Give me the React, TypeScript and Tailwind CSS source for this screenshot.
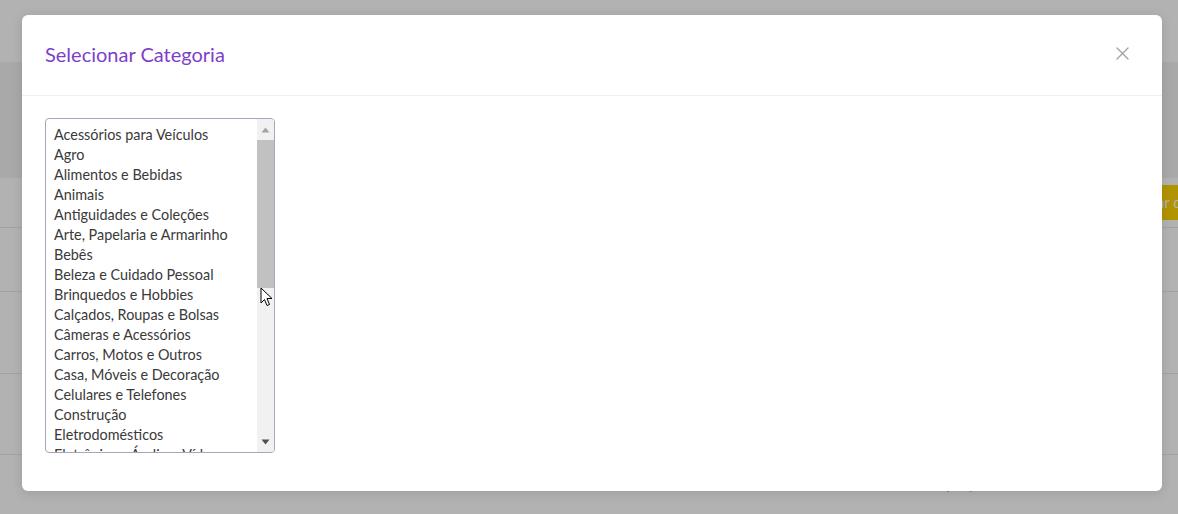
import React from "react";

const cats = [
  "Acessórios para Veículos",
  "Agro",
  "Alimentos e Bebidas",
  "Animais",
  "Antiguidades e Coleções",
  "Arte, Papelaria e Armarinho",
  "Bebês",
  "Beleza e Cuidado Pessoal",
  "Brinquedos e Hobbies",
  "Calçados, Roupas e Bolsas",
  "Câmeras e Acessórios",
  "Carros, Motos e Outros",
  "Casa, Móveis e Decoração",
  "Celulares e Telefones",
  "Construção",
  "Eletrodomésticos",
  "Eletrônicos, Áudio e Vídeo",
  "Esportes e Fitness",
  "Ferramentas",
  "Festas e Lembrancinhas",
  "Games",
  "Imóveis",
  "Indústria e Comércio",
  "Informática",
  "Ingressos",
  "Instrumentos Musicais",
  "Joias e Relógios",
  "Livros, Revistas e Comics",
  "Música, Filmes e Seriados",
  "Saúde",
  "Serviços",
  "Mais Categorias",
];

export default function App() {
  const font = { fontFamily: "Lato, 'Noto Sans', sans-serif" };
  return (
    <div className="relative w-[1178px] h-[514px] overflow-hidden bg-white" style={font}>
      {/* background page */}
      <div className="flex flex-col w-full">
        <div className="h-[62px] bg-white" />
        <div className="h-[116px] bg-[#f3f3f3]" />
        <div className="h-[50px] border-b border-[#e9e9e9] flex items-center justify-end">
          <div className="h-[35px] w-[200px] -mr-[80px] bg-[#ffd400] text-white text-[15px] flex items-center pl-[55px] whitespace-nowrap overflow-hidden">
            Carregar dos
          </div>
        </div>
        <div className="h-[64px] border-b border-[#e9e9e9]" />
        <div className="h-[82px] border-b border-[#e9e9e9]" />
        <div className="h-[81px] border-b border-[#e9e9e9]" />
        <div className="h-[59px] flex justify-between px-[75px] pt-[20px] text-[14px] text-[#333] font-bold">
          <span>Blusas femininas</span>
          <span className="mr-[55px]">01/07/2022 08:00</span>
        </div>
      </div>

      {/* overlay */}
      <div className="absolute inset-0 bg-black/30" />

      {/* modal */}
      <div className="absolute left-[22px] top-[15px] w-[1140px] h-[476px] bg-white rounded-[6px] shadow-[0_2px_12px_rgba(0,0,0,0.12)] flex flex-col">
        <div className="h-[81px] border-b border-[#eef0f3] flex items-center justify-between pl-[23px] pr-[32px] pb-[3px]">
          <h2 className="text-[20px] text-[#7e3fc7] leading-none" style={font}>
            Selecionar Categoria
          </h2>
          <button className="w-[16px] h-[16px] flex items-center justify-center text-[#9aa0a6]">
            <svg width="13" height="13" viewBox="0 0 13 13" fill="none">
              <path d="M1 1L12 12M12 1L1 12" stroke="#a0a4aa" strokeWidth="1.4" strokeLinecap="round" />
            </svg>
          </button>
        </div>
        <div className="pl-[23px] pt-[22px]">
          <div className="relative w-[230px] h-[335px] border border-[#a9a5bd] rounded-[4px] overflow-hidden flex">
            <div className="flex-1 overflow-hidden pt-[6px]">
              {cats.map((c) => (
                <div key={c} className="h-[20px] leading-[20px] pl-[8px] text-[14.4px] text-[#3a3a3a] whitespace-nowrap">
                  {c}
                </div>
              ))}
            </div>
            <div className="w-[17px] h-full bg-[#f1f1f1] flex flex-col items-center">
              <div className="h-[21px] w-full flex items-center justify-center">
                <svg width="9" height="6" viewBox="0 0 9 6"><path d="M4.5 0.5L8.5 5.5H0.5Z" fill="#a3a3a3" /></svg>
              </div>
              <div className="w-[17px] h-[148px] bg-[#c1c1c1]" />
              <div className="flex-1" />
              <div className="h-[21px] w-full flex items-center justify-center">
                <svg width="9" height="6" viewBox="0 0 9 6"><path d="M0.5 0.5H8.5L4.5 5.5Z" fill="#505050" /></svg>
              </div>
            </div>
            {/* cursor */}
            <svg className="absolute left-[214px] top-[168px]" width="13" height="20" viewBox="0 0 13 20">
              <path d="M1 1V16L4.5 12.5L7 18.5L9.5 17.5L7 11.5H12Z" fill="white" stroke="black" strokeWidth="1" strokeLinejoin="round" />
            </svg>
          </div>
        </div>
      </div>
    </div>
  );
}
